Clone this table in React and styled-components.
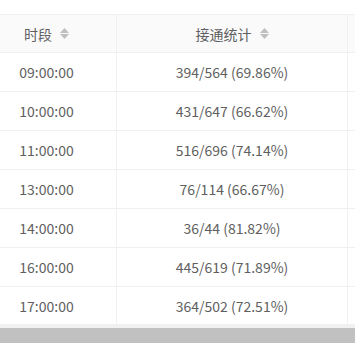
import { Fragment } from "react";
import styled, { createGlobalStyle } from "styled-components";

const GlobalStyle = createGlobalStyle`
  html, body {
    margin: 0;
    padding: 0;
    background: #fff;
  }
  body {
    font-family: "Noto Sans CJK SC", "Noto Sans", sans-serif;
  }
`;

const Viewport = styled.div`
  width: 355px;
  height: 343px;
  overflow: hidden;
  position: relative;
  background: #fff;
  padding-top: 14px;
  box-sizing: border-box;
`;

const Table = styled.div`
  margin-left: -23px;
  display: grid;
  grid-template-columns: 140px 231px 40px;
  border-top: 1px solid #f0f0f0;
  color: #5f5f5f;
  font-size: 14px;
`;

const HeadCell = styled.div`
  height: 38px;
  background: #fafafa;
  border-bottom: 1px solid #f0f0f0;
  border-right: 1px solid #f0f0f0;
  display: flex;
  align-items: center;
  justify-content: center;
  gap: 8px;
  box-sizing: border-box;
`;

const Cell = styled.div`
  height: 39px;
  border-bottom: 1px solid #f0f0f0;
  border-right: ${({ $last }) => ($last ? "none" : "1px solid #f0f0f0")};
  display: flex;
  align-items: center;
  justify-content: center;
  box-sizing: border-box;
`;

const Sorter = styled.span`
  display: inline-flex;
  flex-direction: column;
  gap: 1px;
  color: #bfbfbf;
`;

const Scrollbar = styled.div`
  position: absolute;
  left: 0;
  right: 0;
  bottom: 0;
  height: 19px;
  background: #f1f1f1;
  padding-top: 4px;
  box-sizing: border-box;
`;

const Thumb = styled.div`
  height: 15px;
  background: #c1c1c1;
`;

function SortIcon() {
  return (
    <Sorter>
      <svg width="9" height="5" viewBox="0 0 9 5">
        <path d="M4.5 0L9 5H0z" fill="currentColor" />
      </svg>
      <svg width="9" height="5" viewBox="0 0 9 5">
        <path d="M0 0h9L4.5 5z" fill="currentColor" />
      </svg>
    </Sorter>
  );
}

const rows = [
  ["09:00:00", "394/564 (69.86%)"],
  ["10:00:00", "431/647 (66.62%)"],
  ["11:00:00", "516/696 (74.14%)"],
  ["13:00:00", "76/114 (66.67%)"],
  ["14:00:00", "36/44 (81.82%)"],
  ["16:00:00", "445/619 (71.89%)"],
  ["17:00:00", "364/502 (72.51%)"],
];

export default function App() {
  return (
    <>
      <GlobalStyle />
      <Viewport>
        <Table>
          <HeadCell>
            时段 <SortIcon />
          </HeadCell>
          <HeadCell>
            接通统计 <SortIcon />
          </HeadCell>
          <HeadCell />
          {rows.map(([time, stat]) => (
            <Fragment key={time}>
              <Cell>{time}</Cell>
              <Cell>{stat}</Cell>
              <Cell $last />
            </Fragment>
          ))}
        </Table>
        <Scrollbar>
          <Thumb />
        </Scrollbar>
      </Viewport>
    </>
  );
}
